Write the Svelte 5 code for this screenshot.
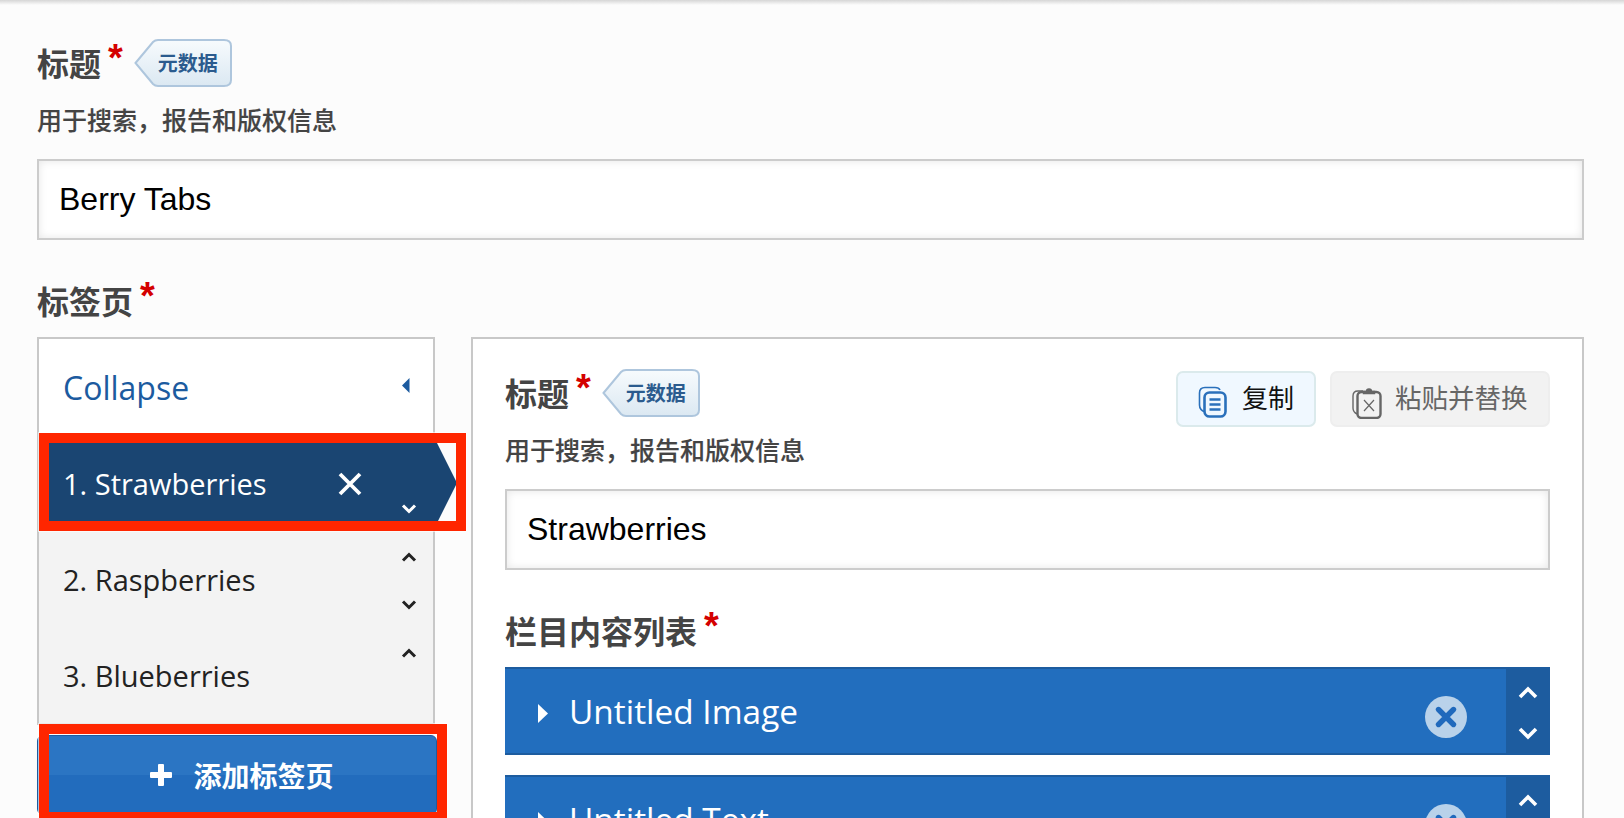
<script lang="ts">
  const tabs = ['1. Strawberries', '2. Raspberries', '3. Blueberries'];
  const items = ['Untitled Image', 'Untitled Text'];
</script>

{#snippet required(text: string)}
  <span class="label">{text}<span class="star">*</span></span>
{/snippet}

{#snippet badge()}
  <span class="badge">
    <svg class="badge-bg" width="98" height="48" viewBox="0 0 98 48">
      <defs>
        <linearGradient id="badge-fill" x1="0" y1="0" x2="0" y2="1">
          <stop offset="0" stop-color="#f7fbfd" />
          <stop offset="1" stop-color="#dbe8f2" />
        </linearGradient>
      </defs>
      <path d="M1.5 24 L19 3 Q21 1 24 1 H90 Q97 1 97 7 V41 Q97 47 90 47 H24 Q21 47 19 45 Z" fill="url(#badge-fill)" stroke="#aec6dd" stroke-width="2" />
    </svg>
    <span class="badge-text">元数据</span>
  </span>
{/snippet}

{#snippet chevron(up: boolean, cls: string)}
  <svg class={cls} width="16" height="10" viewBox="0 0 16 10" fill="none" stroke="currentColor" stroke-width="3">
    <path d={up ? 'M2 8.5 L8 2.5 L14 8.5' : 'M2 1.5 L8 7.5 L14 1.5'} />
  </svg>
{/snippet}

<div class="page">
  <div class="shadow"></div>

  <div class="label-row">
    {@render required('标题')}
    {@render badge()}
  </div>
  <div class="desc">用于搜索，报告和版权信息</div>
  <div class="input">Berry Tabs</div>

  <div class="label-row tabs-label">
    {@render required('标签页')}
  </div>

  <div class="tabs-widget">
    <div class="side">
      <div class="tab-list">
        <div class="collapse">
          <span>Collapse</span>
          <svg class="collapse-arrow" width="8" height="15" viewBox="0 0 8 15"><path d="M7.5 0 V15 L0 7.5 Z" fill="#1c5b9f" /></svg>
        </div>
        {#each tabs as tab, i}
          <div class="tab" class:active={i === 0}>
            <span>{tab}</span>
            {#if i === 0}
              <svg class="tab-close" width="24" height="24" viewBox="0 0 24 24" stroke="#fff" stroke-width="3.8" fill="none">
                <path d="M2 2 L22 22 M22 2 L2 22" />
              </svg>
            {/if}
            {#if i > 0}
              {@render chevron(true, 'chev chev-up')}
            {/if}
            {#if i < tabs.length - 1}
              {@render chevron(false, 'chev chev-down')}
            {/if}
          </div>
        {/each}
      </div>
      <button class="add-tab">
        <svg width="22" height="22" viewBox="0 0 22 22"><path d="M8 1 Q8 0 9 0 H13 Q14 0 14 1 V8 H21 Q22 8 22 9 V13 Q22 14 21 14 H14 V21 Q14 22 13 22 H9 Q8 22 8 21 V14 H1 Q0 14 0 13 V9 Q0 8 1 8 H8 Z" fill="#fff" /></svg>
        <span>添加标签页</span>
      </button>
    </div>

    <div class="panel">
      <div class="panel-head">
        <div class="label-row">
          {@render required('标题')}
          {@render badge()}
        </div>
        <div class="copy-buttons">
          <button class="copy">
            <svg width="29" height="32" viewBox="0 0 29 32" fill="none">
              <path d="M7 26 Q1.5 24 1.5 19 V7 Q1.5 1.5 7 1.5 H17 Q21 1.5 22 4" stroke="#2a70bb" stroke-width="1.6" />
              <rect x="6.5" y="6.5" width="21" height="24" rx="5" stroke="#2a70bb" stroke-width="2.6" />
              <path d="M11.5 13.5 H22.5 M11.5 18.5 H22.5 M11.5 23.5 H22.5" stroke="#2a70bb" stroke-width="2.4" />
            </svg>
            <span>复制</span>
          </button>
          <button class="paste">
            <svg width="30" height="33" viewBox="0 0 30 33" fill="none" stroke="#666">
              <path d="M5 28 Q1 26 1 22 V10 Q1 5 6 5 H11" stroke-width="1.4" />
              <rect x="5.5" y="6" width="23" height="26" rx="4" stroke-width="2.4" />
              <path d="M11.5 7.5 H22.5 V5.5 H19.5 A2.5 2.5 0 0 0 14.5 5.5 H11.5 Z" fill="#666" stroke-width="1.4" />
              <path d="M12 14 L22 25 M22 14 L12 25" stroke-width="1.2" />
            </svg>
            <span>粘贴并替换</span>
          </button>
        </div>
      </div>
      <div class="desc">用于搜索，报告和版权信息</div>
      <div class="input">Strawberries</div>

      <div class="label-row list-label">
        {@render required('栏目内容列表')}
      </div>

      <div class="items">
        {#each items as item}
          <div class="item">
            <svg class="item-arrow" width="10" height="19" viewBox="0 0 10 19"><path d="M0 0 L10 9.5 L0 19 Z" fill="#fff" /></svg>
            <span class="item-title">{item}</span>
            <svg class="item-close" width="42" height="42" viewBox="0 0 42 42">
              <circle cx="21" cy="21" r="21" fill="#b9d2ea" />
              <path d="M13.5 13.5 L28.5 28.5 M28.5 13.5 L13.5 28.5" stroke="#2069bc" stroke-width="5.4" stroke-linecap="round" />
            </svg>
            <div class="item-order">
              <svg width="20" height="13" viewBox="0 0 20 13" fill="none" stroke="#fff" stroke-width="3.6"><path d="M2 11 L10 3 L18 11" /></svg>
              <svg width="20" height="13" viewBox="0 0 20 13" fill="none" stroke="#fff" stroke-width="3.6"><path d="M2 2 L10 10 L18 2" /></svg>
            </div>
          </div>
        {/each}
      </div>
    </div>
  </div>

  <!-- annotation boxes drawn over the screenshot -->
  <div class="mark mark-tab"></div>
  <div class="mark mark-add"></div>
</div>

<style>
  :global(body) {
    margin: 0;
    background: #fcfcfc;
    overflow: hidden;
  }

  .page {
    position: relative;
    height: 818px;
    box-sizing: border-box;
    padding: 39px 40px 0 37px;
    overflow: hidden;
    font-family: "Noto Sans CJK SC", sans-serif;
    color: #444;
  }

  .shadow {
    position: absolute;
    left: 0;
    right: 0;
    top: 0;
    height: 5px;
    background: linear-gradient(#d6d6d6, #fcfcfc);
  }

  .label-row {
    display: flex;
    align-items: center;
    gap: 11px;
    height: 48px;
  }

  .tabs-label,
  .list-label {
    margin-top: 37px;
    margin-bottom: 12px;
  }

  .label {
    margin-top: -2px;
    font-size: 32px;
    font-weight: 700;
    line-height: 48px;
    color: #444;
  }

  .star {
    display: inline-block;
    margin-left: 7px;
    color: #d40000;
    font-family: "Liberation Sans", sans-serif;
    font-size: 38px;
    font-weight: 700;
    line-height: 30px;
    vertical-align: 5px;
  }

  .badge {
    position: relative;
    display: block;
    width: 98px;
    height: 48px;
  }

  .badge-bg {
    position: absolute;
    left: 0;
    top: 0;
  }

  .badge-text {
    position: absolute;
    left: 24px;
    top: 9px;
    font-size: 20px;
    font-weight: 700;
    line-height: 30px;
    color: #2b5b8e;
  }

  .desc {
    margin-top: 17px;
    height: 36px;
    margin-bottom: 19px;
    font-size: 25px;
    font-weight: 500;
    line-height: 30px;
    color: #444;
    -webkit-text-stroke: 0.15px #444;
  }

  .input {
    box-sizing: border-box;
    height: 81px;
    padding-left: 20px;
    border: 2px solid #ccc;
    background: #fff;
    box-shadow: inset 0 0 8px rgba(0, 0, 0, 0.1);
    font-family: "Liberation Sans", sans-serif;
    font-size: 32px;
    line-height: 77px;
    color: #000;
  }

  .tabs-widget {
    display: flex;
    gap: 36px;
  }

  .side {
    flex: none;
    width: 398px;
  }

  .tab-list {
    box-sizing: border-box;
    height: 388px;
    border: 2px solid #c8c8c8;
    background: #f3f3f3;
    font-family: "Open Sans", sans-serif;
  }

  .collapse {
    display: flex;
    align-items: center;
    justify-content: space-between;
    height: 96px;
    padding: 0 23px 0 24px;
    background: #fff;
    font-size: 32px;
    color: #1c5b9f;
  }

  .collapse-arrow {
    margin-top: -3px;
  }

  .tab {
    position: relative;
    display: flex;
    align-items: center;
    height: 96px;
    padding-left: 24px;
    font-size: 29px;
    font-weight: 500;
    color: #222;
  }

  .tab.active {
    margin-right: -23px;
    background: #1a4572;
    color: #fff;
    clip-path: polygon(0 0, 394px 0, 418px 48px, 394px 96px, 0 96px);
  }

  .tab-close {
    position: absolute;
    left: 299px;
    top: 37px;
  }

  .tab :global(.chev) {
    position: absolute;
    left: 362px;
  }

  .tab :global(.chev-up) {
    top: 21px;
    color: #222;
  }

  .tab :global(.chev-down) {
    top: 69px;
  }

  .add-tab {
    display: flex;
    align-items: center;
    justify-content: center;
    gap: 21px;
    box-sizing: border-box;
    width: 400px;
    height: 80px;
    margin-top: 10px;
    padding: 0 2px 0 12px;
    border: 1px solid #1d5c9f;
    border-radius: 6px;
    background: linear-gradient(#2b75c3 0 50%, #226cbd 50%);
    font-family: "Noto Sans CJK SC", sans-serif;
    font-size: 28px;
    font-weight: 700;
    color: #fff;
  }

  .panel {
    flex: 1;
    box-sizing: border-box;
    height: 600px;
    padding: 30px 32px 0 32px;
    border: 2px solid #c8c8c8;
    background: #fff;
  }

  .panel-head {
    display: flex;
    justify-content: space-between;
    height: 48px;
  }

  .copy-buttons {
    display: flex;
    gap: 14px;
    margin-top: 2px;
  }

  .copy-buttons button {
    display: flex;
    align-items: center;
    box-sizing: border-box;
    height: 56px;
    border-radius: 7px;
    font-family: "Noto Sans CJK SC", sans-serif;
    font-size: 26px;
  }

  .copy-buttons button span {
    margin-bottom: 6px;
  }

  .copy-buttons button svg {
    margin-top: 6px;
  }

  .copy {
    gap: 15px;
    width: 140px;
    padding: 0 0 0 20px;
    border: 2px solid #dbeaec;
    background: #f0f8ff;
    color: #111;
  }

  .copy-buttons .paste {
    gap: 13px;
    width: 220px;
    padding: 0 0 0 20px;
    border: 2px solid #eeeeee;
    background: #f2f2f2;
    font-size: 26.5px;
    color: #666;
  }

  .items {
    display: flex;
    flex-direction: column;
    gap: 20px;
  }

  .item {
    position: relative;
    display: flex;
    align-items: center;
    box-sizing: border-box;
    height: 88px;
    border-top: 2px solid #1d5c9f;
    border-bottom: 2px solid #1d5c9f;
    background: #226ebe;
    font-family: "Open Sans", sans-serif;
  }

  .item-arrow {
    margin-left: 33px;
    margin-top: 4px;
  }

  .item-title {
    margin-left: 21px;
    font-size: 33.4px;
    font-weight: 500;
    color: #fff;
  }

  .item-close {
    position: absolute;
    right: 83px;
    top: 27px;
  }

  .item-order {
    position: absolute;
    right: 0;
    top: -2px;
    bottom: -2px;
    display: flex;
    flex-direction: column;
    align-items: center;
    justify-content: center;
    gap: 28px;
    width: 44px;
    padding-top: 4px;
    box-sizing: border-box;
    background: #1d5c9f;
  }

  .mark {
    position: absolute;
    box-sizing: border-box;
    border: 10px solid #ff2600;
    outline: 1px solid rgba(255, 255, 255, 0.6);
  }

  .mark-tab {
    left: 39px;
    top: 433px;
    width: 427px;
    height: 98px;
  }

  .mark-add {
    left: 39px;
    top: 724px;
    width: 408px;
    height: 98px;
  }
</style>
